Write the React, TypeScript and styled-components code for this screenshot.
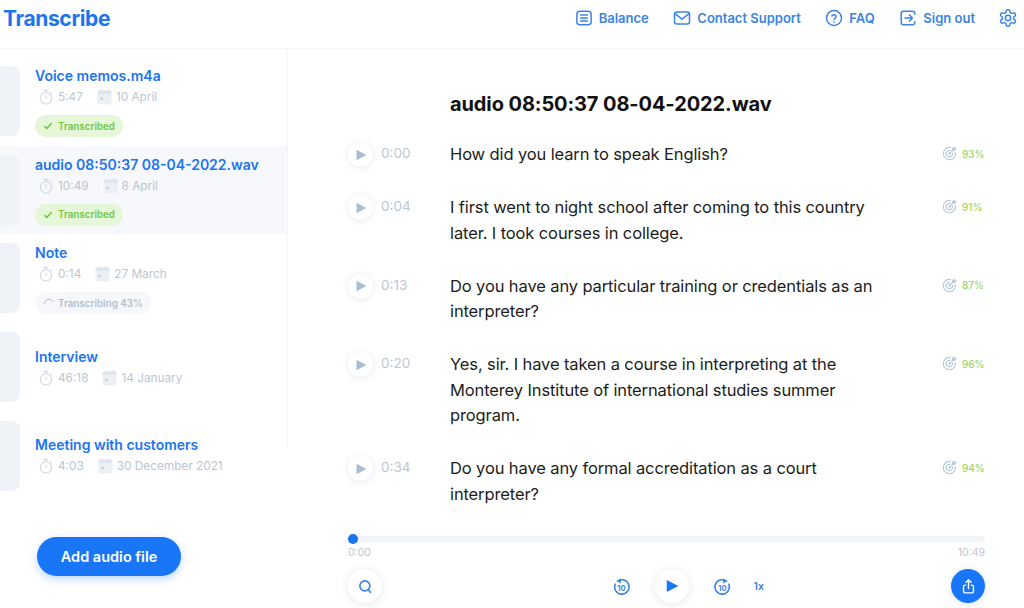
import React from 'react';
import styled, { createGlobalStyle } from 'styled-components';

const blue = '#1b75f0';
const navBlue = '#3b84e4';
const muted = '#bcc6d2';

const GlobalStyle = createGlobalStyle`
    html, body {
        margin: 0;
        padding: 0;
        background: #fff;
    }
    body {
        font-family: Inter, "Liberation Sans", sans-serif;
        color: #17181a;
    }
    * {
        box-sizing: border-box;
    }
`

const Page = styled.div`
    width: 1024px;
    height: 608px;
    overflow: hidden;
    display: flex;
    flex-direction: column;
`

// Header
const Header = styled.header`
    height: 49px;
    flex: none;
    display: flex;
    align-items: center;
    justify-content: space-between;
    padding: 0 6px 12px 3px;
    border-bottom: 1px solid #f3f5f8;
`

const Logo = styled.div`
    font-size: 21px;
    font-weight: 700;
    letter-spacing: -0.35px;
    color: ${blue};
`

const Nav = styled.nav`
    display: flex;
    align-items: center;
    gap: 24.5px;

    & > svg {
        margin-left: -1.5px;
    }
`

const NavLink = styled.a`
    display: flex;
    align-items: center;
    gap: 6px;
    font-size: 13px;
    font-weight: 600;
    color: ${navBlue};
`

// Sidebar
const Body = styled.div`
    flex: 1;
    display: flex;
    min-height: 0;
`

const Sidebar = styled.aside`
    width: 288px;
    flex: none;
`

const FileList = styled.div`
    height: 399px;
    padding-top: 8px;
    border-right: 1px solid #f3f5f8;
`

const FileItem = styled.div<{ $active?: boolean }>`
    height: 88.6px;
    display: flex;
    align-items: center;
    gap: 15px;
    background: ${(props) => (props.$active ? '#f6f8fb' : 'transparent')};
`

const Thumb = styled.div`
    width: 20px;
    height: 70px;
    flex: none;
    border-radius: 0 8px 8px 0;
    background: #eff3f8;
`

const FileInfo = styled.div`
    padding-top: 1px;
`

const FileName = styled.div`
    font-size: 14px;
    line-height: 20px;
    font-weight: 600;
    color: ${blue};
`

const Meta = styled.div`
    display: flex;
    align-items: center;
    height: 22px;
    padding-left: 3px;
    font-size: 11.8px;
    color: ${muted};
`

const MetaPart = styled.span`
    display: flex;
    align-items: center;
    gap: 4px;
    margin-right: 14px;
`

const Badge = styled.div<{ $done?: boolean }>`
    display: inline-flex;
    align-items: center;
    gap: ${(props) => (props.$done ? '5px' : '3px')};
    height: 22px;
    margin-top: 7px;
    padding: 0 8px;
    border-radius: 11px;
    font-size: 9.8px;
    font-weight: 600;
    background: ${(props) => (props.$done ? '#e6f6d9' : '#f5f7fa')};
    color: ${(props) => (props.$done ? '#74c942' : '#b4c0cd')};
`

const AddButton = styled.button`
    display: block;
    width: 144px;
    height: 39px;
    margin: 89px 0 0 37px;
    border: none;
    border-radius: 20px;
    background: #1976f6;
    box-shadow: 0 3px 8px rgba(25, 118, 246, 0.3);
    color: #fff;
    font-family: inherit;
    font-size: 14.5px;
    font-weight: 600;
`

// Transcript
const Main = styled.main`
    flex: 1;
    min-width: 0;
    display: flex;
    flex-direction: column;
    padding: 42px 39px 0 60px;
`

const Title = styled.h1`
    margin: 0 0 25px 102px;
    font-size: 20px;
    line-height: 26px;
    font-weight: 700;
    letter-spacing: -0.1px;
    color: #111;
`

const Row = styled.div`
    display: grid;
    grid-template-columns: 25px 67px 450px 1fr;
    margin-bottom: 28px;
`

const RowPlay = styled.button`
    width: 25px;
    height: 25px;
    padding: 0;
    border: none;
    border-radius: 50%;
    display: flex;
    align-items: center;
    justify-content: center;
    background: #fff;
    box-shadow: 0 1px 6px rgba(120, 140, 170, 0.2);
`

const RowTime = styled.div`
    padding-left: 8px;
    font-size: 13.5px;
    line-height: 23px;
    color: ${muted};
`

const RowText = styled.div`
    margin-left: 10px;
    font-size: 16.5px;
    line-height: 25.3px;
    letter-spacing: -0.12px;
    color: #1c1d20;
`

const Score = styled.div`
    display: flex;
    align-items: center;
    justify-content: flex-end;
    gap: 5px;
    height: 23px;
    padding-right: 2px;
    font-size: 10px;
    font-weight: 500;
    color: #9bd66b;

    & span {
        width: 21px;
    }
`

// Player
const Player = styled.div`
    margin-top: auto;
    padding-bottom: 5px;
`

const Track = styled.div`
    position: relative;
    height: 6px;
    border-radius: 3px;
    background: #f1f4f8;
`

const Knob = styled.div`
    position: absolute;
    left: 0;
    top: -2px;
    width: 10px;
    height: 10px;
    border-radius: 50%;
    background: ${blue};
`

const Times = styled.div`
    display: flex;
    justify-content: space-between;
    margin-top: 4px;
    font-size: 10.5px;
    line-height: 13px;
    color: ${muted};
`

const Controls = styled.div`
    display: flex;
    align-items: center;
    justify-content: space-between;
    margin-top: 10px;
`

const RoundButton = styled.button<{ $primary?: boolean }>`
    width: 34px;
    height: 34px;
    padding: 0;
    border: none;
    border-radius: 50%;
    display: flex;
    align-items: center;
    justify-content: center;
    flex: none;
    background: ${(props) => (props.$primary ? '#1976f6' : '#fff')};
    box-shadow: 0 1px 8px rgba(120, 140, 170, 0.22);
`

const Transport = styled.div`
    display: flex;
    align-items: center;
    width: 153px;
    margin-left: 45px;
    gap: 25px;
`

const Speed = styled.span`
    margin-left: -2px;
    font-size: 10.5px;
    font-weight: 600;
    color: ${navBlue};
`

// Icons
const Icon = (props: { size?: number; color?: string; width?: number; children: React.ReactNode }) => (
    <svg
        width={props.size || 16}
        height={props.size || 16}
        viewBox="0 0 24 24"
        fill="none"
        stroke={props.color || navBlue}
        strokeWidth={props.width || 2}
        strokeLinecap="round"
        strokeLinejoin="round"
    >
        {props.children}
    </svg>
);

const BalanceIcon = () => (
    <Icon size={18}>
        <rect x="2.5" y="3" width="19" height="18" rx="4" />
        <path d="M7.5 8h9M7.5 12h9M7.5 16h9" />
    </Icon>
);

const MailIcon = () => (
    <Icon size={18}>
        <rect x="2" y="4" width="20" height="16" rx="3" />
        <path d="M3 6.5l9 7 9-7" />
    </Icon>
);

const HelpIcon = () => (
    <Icon size={18}>
        <circle cx="12" cy="12" r="10" />
        <path d="M9.2 9.4a2.9 2.9 0 0 1 5.6.8c0 1.9-2.8 2.4-2.8 4" />
        <path d="M12 17.4v.1" />
    </Icon>
);

const SignOutIcon = () => (
    <Icon size={18}>
        <path d="M21 7V6a3 3 0 0 0-3-3H6a3 3 0 0 0-3 3v12a3 3 0 0 0 3 3h12a3 3 0 0 0 3-3v-1" />
        <path d="M8 12h10M14 8l4 4-4 4" />
    </Icon>
);

const GearIcon = () => (
    <Icon size={20} width={1.8}>
        <path d="M12.2 2h-.4a2 2 0 0 0-2 2v.2a2 2 0 0 1-1 1.7l-.4.3a2 2 0 0 1-2 0l-.2-.1a2 2 0 0 0-2.7.7l-.2.4a2 2 0 0 0 .7 2.7l.2.1a2 2 0 0 1 1 1.7v.5a2 2 0 0 1-1 1.8l-.2.1a2 2 0 0 0-.7 2.7l.2.4a2 2 0 0 0 2.7.7l.2-.1a2 2 0 0 1 2 0l.4.3a2 2 0 0 1 1 1.7v.2a2 2 0 0 0 2 2h.4a2 2 0 0 0 2-2v-.2a2 2 0 0 1 1-1.7l.4-.3a2 2 0 0 1 2 0l.2.1a2 2 0 0 0 2.7-.7l.2-.4a2 2 0 0 0-.7-2.7l-.2-.1a2 2 0 0 1-1-1.8v-.5a2 2 0 0 1 1-1.7l.2-.1a2 2 0 0 0 .7-2.7l-.2-.4a2 2 0 0 0-2.7-.7l-.2.1a2 2 0 0 1-2 0l-.4-.3a2 2 0 0 1-1-1.7V4a2 2 0 0 0-2-2z" />
        <circle cx="12" cy="12" r="3.2" />
    </Icon>
);

const TimerIcon = () => (
    <Icon size={16} color="#d3dbe4" width={1.8}>
        <path d="M9 2h6M12 2v3" />
        <circle cx="12" cy="14" r="8.5" />
        <path d="M12 10v4" />
        <path d="M19 5l1.5 1.5" />
    </Icon>
);

const CalendarIcon = () => (
    <svg width="15" height="16" viewBox="0 0 15 16">
        <path d="M3 0h1.6v2H3zM10.4 0H12v2h-1.6z" fill="#dfe5ec" />
        <rect x="0.5" y="1.5" width="14" height="14" rx="2" fill="#ecf0f5" />
        <rect x="0.5" y="1.5" width="14" height="3.5" rx="1.5" fill="#dfe5ec" />
        <rect x="3" y="8.5" width="3" height="2.5" fill="#ccd5df" />
    </svg>
);

const CheckIcon = () => (
    <Icon size={10} color="#6cc63a" width={3.4}>
        <path d="M4 13l5 5L20 6" />
    </Icon>
);

const SpinnerIcon = () => (
    <Icon size={12} color="#b4c0cd" width={2}>
        <path d="M3 13a9 9 0 0 1 17-4" />
    </Icon>
);

const TriangleIcon = (props: { size: number; color: string }) => (
    <svg width={props.size} height={props.size} viewBox="0 0 12 12">
        <path d="M1.5 0.8L11.4 6 1.5 11.2z" fill={props.color} />
    </svg>
);

const TargetIcon = () => (
    <Icon size={15} color="#bccbdb" width={2}>
        <path d="M21.5 10.5a9.8 9.8 0 1 1-8-8" />
        <path d="M17 11.5a5.2 5.2 0 1 1-4.5-4.5" />
        <circle cx="12" cy="12" r="1" />
        <path d="M12 12l7-7M17 4v3h3l2.5-2.5h-2.500V2z" />
    </Icon>
);

const SearchIcon = () => (
    <Icon size={15} color={navBlue} width={2.6}>
        <circle cx="11" cy="11" r="8" />
        <path d="M16.500 17l3.500 4.500" />
    </Icon>
);

const ShareIcon = () => (
    <Icon size={17} color="#fff" width={2}>
        <path d="M8 10H7a2 2 0 0 0-2 2v7a2 2 0 0 0 2 2h10a2 2 0 0 0 2-2v-7a2 2 0 0 0-2-2h-1" />
        <path d="M12 15V3M8.500 6L12 2.500 15.500 6" />
    </Icon>
);

const SkipIcon = (props: { forward?: boolean }) => (
    <svg width="17" height="19" viewBox="0 0 17 19" fill="none" stroke={navBlue} strokeWidth="1.6" strokeLinecap="round">
        <g transform={props.forward ? 'translate(17 0) scale(-1 1)' : undefined}>
            <path d="M4.500 4.200a7.200 7.200 0 1 1-2.300 3" />
            <path d="M7.800 1.200L4.300 4l3.500 2.800z" fill={navBlue} stroke="none" />
        </g>
        <text x="8.500" y="14.400" textAnchor="middle" fontSize="7.500" fontWeight="700" fill={navBlue} stroke="none" fontFamily="Inter, sans-serif">10</text>
    </svg>
);

type AudioFile = {
    name: string;
    duration: string;
    date: string;
    status?: 'done' | 'progress';
    active?: boolean;
};

const files: AudioFile[] = [
    { name: 'Voice memos.m4a', duration: '5:47', date: '10 April', status: 'done' },
    { name: 'audio 08:50:37 08-04-2022.wav', duration: '10:49', date: '8 April', status: 'done', active: true },
    { name: 'Note', duration: '0:14', date: '27 March', status: 'progress' },
    { name: 'Interview', duration: '46:18', date: '14 January' },
    { name: 'Meeting with customers', duration: '4:03', date: '30 December 2021' },
];

const lines = [
    { time: '0:00', text: 'How did you learn to speak English?', score: '93%' },
    { time: '0:04', text: 'I first went to night school after coming to this country later. I took courses in college.', score: '91%' },
    { time: '0:13', text: 'Do you have any particular training or credentials as an interpreter?', score: '87%' },
    { time: '0:20', text: 'Yes, sir. I have taken a course in interpreting at the Monterey Institute of international studies summer program.', score: '96%' },
    { time: '0:34', text: 'Do you have any formal accreditation as a court interpreter?', score: '94%' },
];

export default function App() {
    return (
        <Page>
            <GlobalStyle />
            <Header>
                <Logo>Transcribe</Logo>
                <Nav>
                    <NavLink><BalanceIcon />Balance</NavLink>
                    <NavLink><MailIcon />Contact Support</NavLink>
                    <NavLink><HelpIcon />FAQ</NavLink>
                    <NavLink><SignOutIcon />Sign out</NavLink>
                    <GearIcon />
                </Nav>
            </Header>
            <Body>
                <Sidebar>
                    <FileList>
                        {files.map((file) => (
                            <FileItem key={file.name} $active={file.active}>
                                <Thumb />
                                <FileInfo>
                                    <FileName>{file.name}</FileName>
                                    <Meta>
                                        <MetaPart><TimerIcon />{file.duration}</MetaPart>
                                        <MetaPart><CalendarIcon />{file.date}</MetaPart>
                                    </Meta>
                                    {file.status === 'done' && <Badge $done><CheckIcon />Transcribed</Badge>}
                                    {file.status === 'progress' && <Badge><SpinnerIcon />Transcribing 43%</Badge>}
                                </FileInfo>
                            </FileItem>
                        ))}
                    </FileList>
                    <AddButton>Add audio file</AddButton>
                </Sidebar>
                <Main>
                    <Title>audio 08:50:37 08-04-2022.wav</Title>
                    {lines.map((line) => (
                        <Row key={line.time}>
                            <RowPlay><TriangleIcon size={12} color="#a9bdd3" /></RowPlay>
                            <RowTime>{line.time}</RowTime>
                            <RowText>{line.text}</RowText>
                            <Score><TargetIcon /><span>{line.score}</span></Score>
                        </Row>
                    ))}
                    <Player>
                        <Track><Knob /></Track>
                        <Times><span>0:00</span><span>10:49</span></Times>
                        <Controls>
                            <RoundButton><SearchIcon /></RoundButton>
                            <Transport>
                                <SkipIcon />
                                <RoundButton><TriangleIcon size={14} color="#1976f6" /></RoundButton>
                                <SkipIcon forward />
                                <Speed>1x</Speed>
                            </Transport>
                            <RoundButton $primary><ShareIcon /></RoundButton>
                        </Controls>
                    </Player>
                </Main>
            </Body>
        </Page>
    );
}
